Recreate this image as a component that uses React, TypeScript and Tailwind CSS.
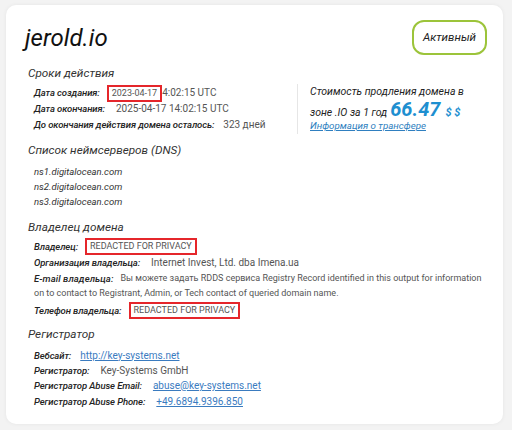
import React from 'react';

const label = "font-['Roboto',sans-serif] italic font-medium text-[9.5px] tracking-[-0.1px] text-[#222] leading-[16px] whitespace-nowrap";
const value = "font-['Roboto',sans-serif] text-[10px] text-[#555] leading-[16px] whitespace-nowrap";
const link = "font-['Roboto',sans-serif] text-[10px] text-[#3a7bbf] underline leading-[16px] whitespace-nowrap";
const heading = "font-['Roboto',sans-serif] italic text-[11.75px] text-[#333] leading-[18px]";

function Row({ name, h = 'h-[16px]', children }: { name: string; h?: string; children: React.ReactNode }) {
  return (
    <div className={`flex items-center gap-[7px] ${h}`}>
      <span className={label}>{name}</span>
      {children}
    </div>
  );
}

function Redacted({ children }: { children: React.ReactNode }) {
  return (
    <span className="font-['Roboto',sans-serif] text-[9px] text-[#555] whitespace-nowrap border-2 border-[#e5262b] px-[3px] leading-[13px]">
      {children}
    </span>
  );
}

export default function App() {
  return (
    <div className="w-[512px] h-[430px] bg-[#f3f3f3] pt-[5px] pl-[6px]">
      <div className="w-[497px] h-[419px] bg-white rounded-[10px] shadow-[0_0_4px_rgba(0,0,0,0.06)] pl-[22px] pr-[16px] pt-[15px]">
        {/* header */}
        <div className="flex items-start justify-between h-[40px]">
          <h1 className="font-['Roboto',sans-serif] italic text-[24px] text-[#111] leading-[32px] mt-[2px] -ml-[3px]">
            jerold.io
          </h1>
          <div className="w-[75px] h-[35px] border-2 border-[#9cc43a] rounded-[12px] flex items-center justify-center font-['Roboto',sans-serif] italic text-[11.5px] text-[#222]">
            Активный
          </div>
        </div>

        {/* validity */}
        <div className="mt-[4px]">
          <div className={heading}>Сроки действия</div>
          <div className="flex mt-[3px]">
            <div className="w-[269px] pl-[6px] flex flex-col">
              <Row name="Дата создания:">
                <span className="flex items-center">
                  <Redacted>2023-04-17</Redacted>
                  <span className={value}>4:02:15 UTC</span>
                </span>
              </Row>
              <Row name="Дата окончания:">
                <span className={`${value} ml-[4px]`}>2025-04-17 14:02:15 UTC</span>
              </Row>
              <Row name="До окончания действия домена осталось:">
                <span className={`${value} ml-[2px]`}>323 дней</span>
              </Row>
            </div>
            <div className="border-l border-[#e6e6e6] pl-[12px] h-[50px] -mt-[1px]">
              <div className="font-['Roboto',sans-serif] italic text-[10.5px] text-[#222] leading-[16px] whitespace-nowrap">
                Стоимость продления домена в
              </div>
              <div className="flex items-baseline gap-[3px] leading-[18px]">
                <span className="font-['Roboto',sans-serif] italic text-[10.5px] text-[#222]">зоне .IO за 1 год</span>
                <span className="font-['Roboto',sans-serif] italic font-bold text-[20px] text-[#1e8fd0] leading-[18px]">66.47</span>
                <span className="font-['Roboto',sans-serif] italic font-bold text-[11px] text-[#1e8fd0] ml-[2px]">$ $</span>
              </div>
              <a className="font-['Roboto',sans-serif] italic text-[9.75px] text-[#2f7fc0] underline leading-[14px] block -mt-[3px]">
                Информация о трансфере
              </a>
            </div>
          </div>
        </div>

        {/* DNS */}
        <div className="mt-[7px]">
          <div className={heading}>Список неймсерверов (DNS)</div>
          <div className="pl-[6px] mt-[5px] flex flex-col font-['Roboto',sans-serif] italic text-[9.5px] text-[#333] leading-[15px]">
            <span>ns1.digitalocean.com</span>
            <span>ns2.digitalocean.com</span>
            <span>ns3.digitalocean.com</span>
          </div>
        </div>

        {/* owner */}
        <div className="mt-[9px]">
          <div className={heading}>Владелец домена</div>
          <div className="pl-[6px] mt-[2px] flex flex-col">
            <Row name="Владелец:" h="h-[17px]">
              <Redacted>REDACTED FOR PRIVACY</Redacted>
            </Row>
            <Row name="Организация владельца:">
              <span className={`${value} ml-[4px]`}>Internet Invest, Ltd. dba Imena.ua</span>
            </Row>
            <div className="flex flex-col whitespace-nowrap">
              <div className="h-[15px] flex items-center gap-[7px]">
                <span className={`${label} !leading-[15px] tracking-[0.1px]`}>E-mail владельца:</span>
                <span className="font-['Roboto',sans-serif] text-[9px] text-[#555] leading-[15px]">
                  Вы можете задать RDDS сервиса Registry Record identified in this output for information
                </span>
              </div>
              <div className="h-[15px] flex items-center font-['Roboto',sans-serif] text-[9px] text-[#555] leading-[15px]">
                on to contact to Registrant, Admin, or Tech contact of queried domain name.
              </div>
            </div>
            <Row name="Телефон владельца:" h="h-[19px]">
              <Redacted>REDACTED FOR PRIVACY</Redacted>
            </Row>
          </div>
        </div>

        {/* registrar */}
        <div className="mt-[5px]">
          <div className={heading}>Регистратор</div>
          <div className="pl-[6px] mt-[5px] flex flex-col">
            <Row name="Вебсайт:" h="h-[15px]">
              <a className={`${link} ml-[2px]`}>http://key-systems.net</a>
            </Row>
            <Row name="Регистратор:" h="h-[15.5px]">
              <span className={`${value} ml-[4px]`}>Key-Systems GmbH</span>
            </Row>
            <Row name="Регистратор Abuse Email:" h="h-[15.5px]">
              <a className={`${link} ml-[4px]`}>abuse@key-systems.net</a>
            </Row>
            <Row name="Регистратор Abuse Phone:" h="h-[15px]">
              <a className={`${link} ml-[4px]`}>+49.6894.9396.850</a>
            </Row>
          </div>
        </div>
      </div>
    </div>
  );
}
